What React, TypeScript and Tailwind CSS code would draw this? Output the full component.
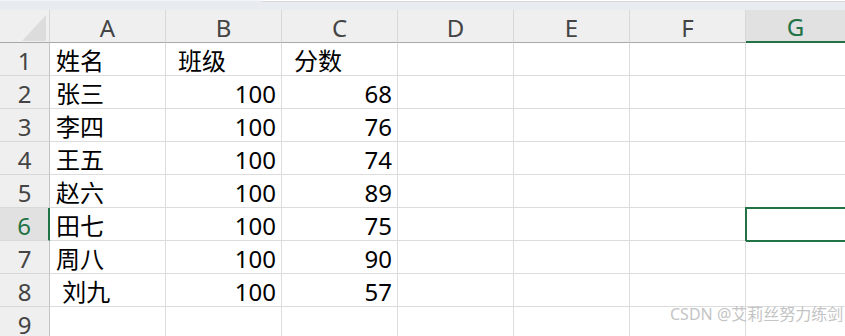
import React from "react";

const cols = ["A", "B", "C", "D", "E", "F", "G"];
const data: [string, string, string][] = [
  ["姓名", "班级", "分数"],
  ["张三", "100", "68"],
  ["李四", "100", "76"],
  ["王五", "100", "74"],
  ["赵六", "100", "89"],
  ["田七", "100", "75"],
  ["周八", "100", "90"],
  ["\u00a0刘九", "100", "57"],
  ["", "", ""],
];

const font = { fontFamily: '"Noto Sans", "Noto Sans CJK SC", sans-serif' };

export default function App() {
  return (
    <div className="relative w-[845px] h-[336px] overflow-hidden bg-white" style={font}>
      <div className="flex h-[10px] bg-[#e8ebef]">
        <div className="w-[262px] border-t border-[#f4f5f7]" />
        <div className="flex-1 h-[2px] bg-white border-b border-[#d6d8dc]" />
      </div>
      <div className="grid grid-cols-[50px_repeat(6,116px)_1fr] grid-rows-[33px] auto-rows-[33px]">
        <div className="relative bg-[#efefef] border-b border-b-[#a8a8a8] border-r border-r-[#d8d8d8]">
          <div className="absolute left-[22px] top-[5px] w-[24px] h-[26px] bg-[#dcdcdc] [clip-path:polygon(100%_0,100%_100%,0_100%)]" />
        </div>
        {cols.map((c, i) => (
          <div
            key={c}
            className={
              i === 6
                ? "flex items-center justify-center bg-[#e1e1e1] border-b-2 border-b-[#217346] text-[#217346] text-[24px] leading-none pt-[3px]"
                : "flex items-center justify-center bg-[#efefef] border-b border-b-[#a8a8a8] border-r border-r-[#d8d8d8] text-[#444] text-[24px] leading-none pt-[3px]"
            }
          >
            {c}
          </div>
        ))}
        {data.map((row, r) => {
          const sel = r === 5;
          return (
            <React.Fragment key={r}>
              <div
                className={
                  sel
                    ? "flex items-center justify-center bg-[#e1e1e1] border-r-2 border-r-[#217346] border-b border-b-[#d8d8d8] text-[#217346] text-[24px] leading-none pt-[3px]"
                    : "flex items-center justify-center bg-[#efefef] border-r border-r-[#c4c4c4] border-b border-b-[#d8d8d8] text-[#444] text-[24px] leading-none pt-[3px]"
                }
              >
                {r + 1}
              </div>
              <div className="flex items-center pl-[6px] border-r border-b border-[#dcdcdc] text-[24px] text-black leading-none pt-[3px] whitespace-pre">
                {row[0]}
              </div>
              <div className={`flex items-center ${r === 0 ? "justify-start pl-[12px]" : "justify-end pr-[5px]"} border-r border-b border-[#dcdcdc] text-[24px] text-black leading-none pt-[3px]`}>
                {row[1]}
              </div>
              <div className={`flex items-center ${r === 0 ? "justify-start pl-[12px]" : "justify-end pr-[5px]"} border-r border-b border-[#dcdcdc] text-[24px] text-black leading-none pt-[3px]`}>
                {row[2]}
              </div>
              <div className="border-r border-b border-[#dcdcdc]" />
              <div className="border-r border-b border-[#dcdcdc]" />
              <div className="border-r border-b border-[#dcdcdc]" />
              <div className={sel ? "border-2 border-[#217346] -ml-[1px] -mt-[1px] h-[35px] mr-[-4px]" : "border-b border-[#dcdcdc]"} />
            </React.Fragment>
          );
        })}
      </div>
      <div className="absolute left-[670px] top-[306px] text-[16px] leading-none text-[#c4c4c4] whitespace-nowrap">
        CSDN @艾莉丝努力练剑
      </div>
    </div>
  );
}
